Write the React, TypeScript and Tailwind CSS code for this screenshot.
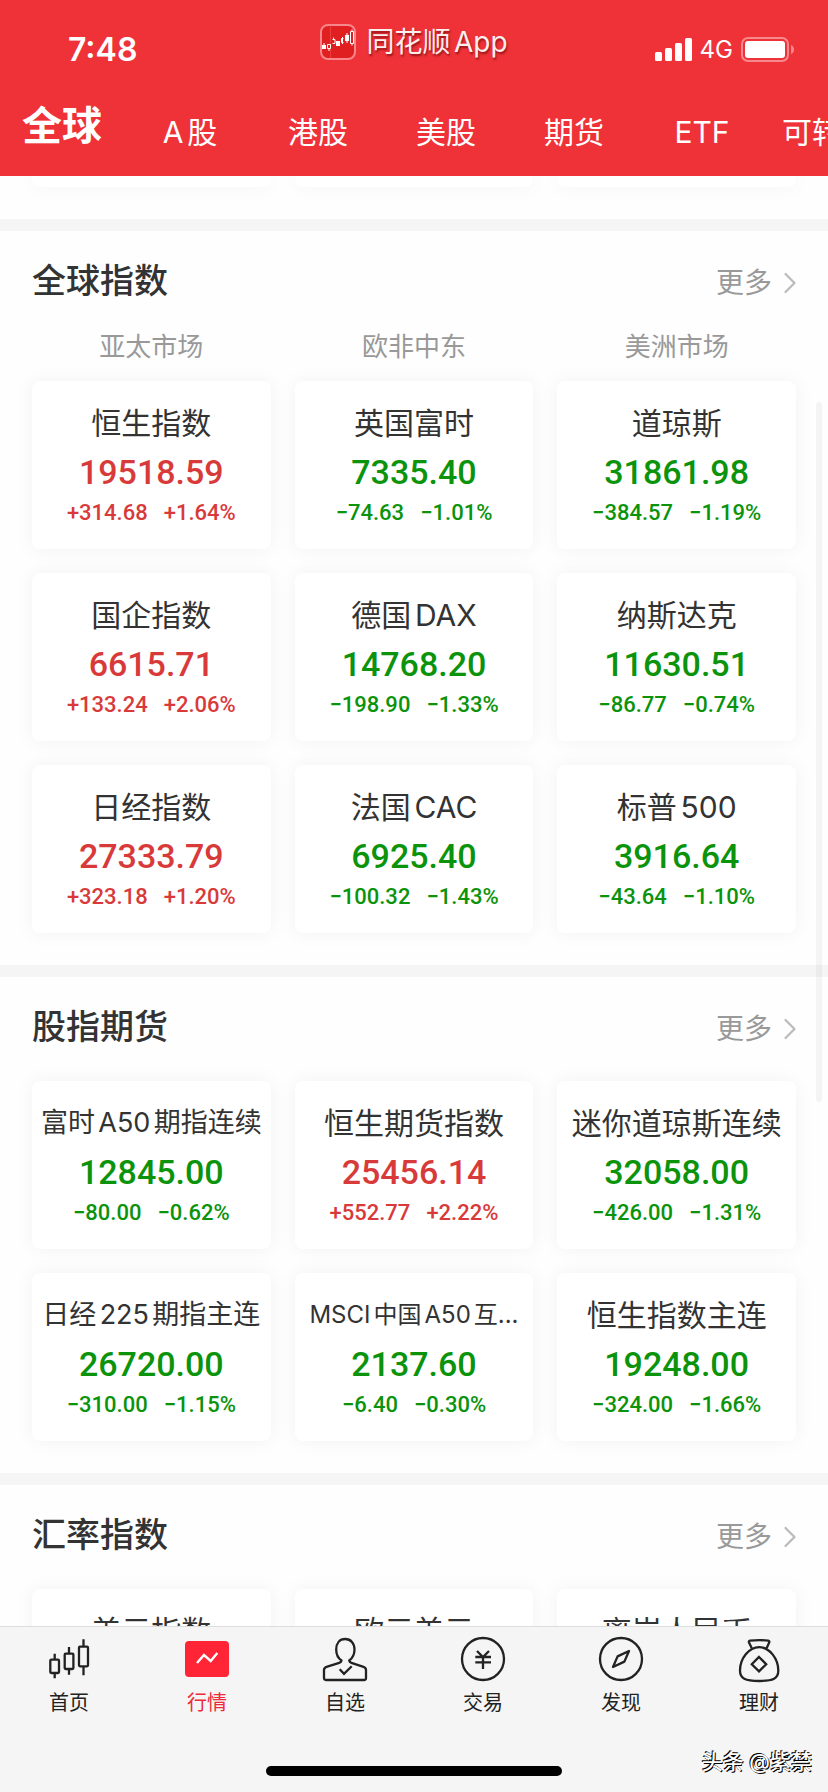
import React from 'react';
import { ChevronRight } from 'lucide-react';

interface Quote {
  name: string;
  price?: string;
  change?: string;
  percent?: string;
}

interface Section {
  title: string;
  markets?: string[];
  quotes: Quote[];
}

const categories = ['全球', 'A股', '港股', '美股', '期货', 'ETF', '可转债'];

const sections: Section[] = [
  {
    title: '全球指数',
    markets: ['亚太市场', '欧非中东', '美洲市场'],
    quotes: [
      { name: '恒生指数', price: '19518.59', change: '+314.68', percent: '+1.64%' },
      { name: '英国富时', price: '7335.40', change: '−74.63', percent: '−1.01%' },
      { name: '道琼斯', price: '31861.98', change: '−384.57', percent: '−1.19%' },
      { name: '国企指数', price: '6615.71', change: '+133.24', percent: '+2.06%' },
      { name: '德国DAX', price: '14768.20', change: '−198.90', percent: '−1.33%' },
      { name: '纳斯达克', price: '11630.51', change: '−86.77', percent: '−0.74%' },
      { name: '日经指数', price: '27333.79', change: '+323.18', percent: '+1.20%' },
      { name: '法国CAC', price: '6925.40', change: '−100.32', percent: '−1.43%' },
      { name: '标普500', price: '3916.64', change: '−43.64', percent: '−1.10%' },
    ],
  },
  {
    title: '股指期货',
    quotes: [
      { name: '富时A50期指连续', price: '12845.00', change: '−80.00', percent: '−0.62%' },
      { name: '恒生期货指数', price: '25456.14', change: '+552.77', percent: '+2.22%' },
      { name: '迷你道琼斯连续', price: '32058.00', change: '−426.00', percent: '−1.31%' },
      { name: '日经225期指主连', price: '26720.00', change: '−310.00', percent: '−1.15%' },
      { name: 'MSCI中国A50互...', price: '2137.60', change: '−6.40', percent: '−0.30%' },
      { name: '恒生指数主连', price: '19248.00', change: '−324.00', percent: '−1.66%' },
    ],
  },
  {
    title: '汇率指数',
    quotes: [{ name: '美元指数' }, { name: '欧元美元' }, { name: '离岸人民币' }],
  },
];

// longer names step down in size so they stay on one line
const nameSize = (name: string) => {
  if (name.length > 10) return 'text-2xl';
  if (name.length > 7) return 'text-[27px]';
  return 'text-3xl';
};

const iconClass = 'w-12 h-12 fill-none stroke-[#222222] stroke-[2.3]';

const tabs = [
  {
    label: '首页',
    icon: (
      <svg viewBox="0 0 48 48" className={iconClass} aria-hidden="true">
        <rect x="5.3" y="24.7" width="8.7" height="13.3" rx="1" />
        <path d="M9.7 18.7v6M9.7 38v5.3" />
        <rect x="19.7" y="18.7" width="8.7" height="15.3" rx="1" />
        <path d="M24 12v6.7M24 34v5.7" />
        <rect x="34" y="11.7" width="9" height="19.6" rx="1" />
        <path d="M38.5 4.3v7.4M38.5 31.3v9" />
      </svg>
    ),
  },
  {
    label: '行情',
    active: true,
    icon: (
      <svg viewBox="0 0 48 48" className="w-12 h-12 fill-none" aria-hidden="true">
        <rect x="2" y="6" width="44" height="36" rx="4" fill="#ff2436" />
        <path d="M14 28l7-8 6.7 6 6.6-8" stroke="#fff" strokeWidth="2.4" />
      </svg>
    ),
  },
  {
    label: '自选',
    icon: (
      <svg viewBox="0 0 48 48" className={iconClass} aria-hidden="true">
        <path
          d="M20.5 25.5C16.8 23 15.2 19.5 15.2 14.5C15.2 8.2 18.6 4 24.2 4S33.5 8.2 33.5 14.5C33.5 19.5 31.8 23 28.2 25.5C28.4 26.8 29.2 27.4 30.4 27.8L42.5 31.8C44.2 32.4 45 33.4 45 35V43C45 44.4 44.4 45 43 45H5C3.6 45 3 44.4 3 43V35C3 33.4 3.8 32.4 5.5 31.8L18.2 27.8C19.4 27.4 20.3 26.8 20.5 25.5Z"
          strokeLinejoin="round"
        />
        <path d="M18.7 34.3l4.3 4.6 7.7-7.6" />
      </svg>
    ),
  },
  {
    label: '交易',
    icon: (
      <svg viewBox="0 0 48 48" className={iconClass} aria-hidden="true">
        <circle cx="24" cy="24" r="21" />
        <path d="M18 16l6 6 6-6M16.3 22H32M16.3 27.4H32M24 22v12" />
      </svg>
    ),
  },
  {
    label: '发现',
    icon: (
      <svg viewBox="0 0 48 48" className={iconClass} aria-hidden="true">
        <circle cx="24" cy="24" r="21" />
        <path d="M32 16L20.6 21.4L16 32L27.4 26.6Z" strokeLinejoin="round" />
      </svg>
    ),
  },
  {
    label: '理财',
    icon: (
      <svg viewBox="0 0 48 48" className={iconClass} aria-hidden="true">
        <path d="M16.8 13.2L14 7.6C13.6 6.5 14 5.9 15 5.7C21 4.9 27.4 4.9 33.2 5.7C34.2 5.9 34.6 6.5 34.2 7.6L31.6 13.2" strokeLinejoin="round" />
        <path d="M24.2 12.2C14 12.2 5 23.5 5 35.5C5 43.5 10 46 24.2 46S43.3 43.5 43.3 35.5C43.3 23.5 34.4 12.2 24.2 12.2Z" />
        <path d="M24 22l7.2 7.2-7.2 7.2-7.2-7.2Z" />
      </svg>
    ),
  },
];

const StatusBar: React.FC = () => (
  <div className="grid grid-cols-3 items-center h-24">
    <p className="pt-1 pl-[68px] text-[32px] leading-10 font-semibold">7:48</p>
    <div className="flex items-center justify-center gap-2.5 pb-3 whitespace-nowrap">
      <svg viewBox="0 0 36 36" className="w-9 h-9 shrink-0" aria-hidden="true">
        <rect x="1" y="1" width="34" height="34" rx="7" fill="#e02020" stroke="#f8868a" strokeWidth="2" />
        <path d="M10.5 2v32" stroke="#ee3b3b" />
        <path d="M2 21h4v4H2zM16 17h4v5h-4zM25 11h4v6h-4z" fill="#fff" />
        <path
          d="M7.5 20.5h3v4h-3zM9 24v3M4 19v2M12.500 15.500h2.500v4h-2.500M13.500 13.500v2M23.500 14.500h-2v4h2M22.500 13v7M27 9v10M30.500 7.500h3v12h-3zM32 5.500v2M32 19.500v2"
          fill="none"
          stroke="#fff"
        />
      </svg>
      <span className="text-[28px] leading-9 text-[#fbeeee] [text-shadow:1px_2px_2px_rgba(90,0,0,0.6)] [text-autospace:normal]">
        同花顺App
      </span>
    </div>
    <div className="flex items-center justify-end gap-2 pt-1 pr-[34px]">
      <svg viewBox="0 0 37 24" className="w-[37px] h-6 fill-white" aria-hidden="true">
        <rect x="0" y="14" width="7" height="9" rx="1.5" />
        <rect x="10" y="10" width="7" height="13" rx="1.5" />
        <rect x="20" y="5" width="7" height="18" rx="1.5" />
        <rect x="30" y="0" width="7" height="23" rx="1.5" />
      </svg>
      <span className="text-2xl">4G</span>
      <svg viewBox="0 0 53 26" className="w-[53px] h-[26px] fill-white" aria-hidden="true">
        <rect x="1" y="1" width="46" height="23" rx="6" fill="none" stroke="#f7898d" strokeWidth="2" />
        <rect x="4" y="4" width="40" height="17" rx="3" />
        <path d="M50 8c2 1 3 2.500 3 4.500s-1 3.500-3 4.500z" fill="#f7898d" />
      </svg>
    </div>
  </div>
);

const QuoteCard: React.FC<{ quote: Quote }> = ({ quote }) => (
  <button
    type="button"
    className="flex flex-col items-center h-42 pt-6 bg-white rounded-lg shadow-[0_0_20px_rgba(0,0,0,0.05)] whitespace-nowrap"
  >
    <span className={`${nameSize(quote.name)} leading-9 mb-2.5 text-[#333333] [text-autospace:normal]`}>
      {quote.name}
    </span>
    {quote.price && (
      <span
        className={`flex flex-col items-center font-[Roboto,sans-serif] font-medium ${
          quote.change?.startsWith('+') ? 'text-[#d83a3a]' : 'text-[#0b930b]'
        }`}
      >
        <span className="text-[34px] leading-[42px]">{quote.price}</span>
        <span className="flex gap-4 text-[22px] leading-10">
          <span>{quote.change}</span>
          <span>{quote.percent}</span>
        </span>
      </span>
    )}
  </button>
);

const QuoteSection: React.FC<{ section: Section }> = ({ section }) => (
  <section className="border-t-12 border-[#f5f5f5] pb-8">
    <div className="flex items-center justify-between h-26 px-8 pb-1">
      <h2 className="text-[34px] leading-10 font-medium text-[#333333]">{section.title}</h2>
      <a href="#" className="flex items-center pt-1 text-[28px] leading-9 text-[#999999]">
        更多
        <ChevronRight className="w-9 h-9 -mr-3 text-[#bbbbbb]" strokeWidth={1.5} />
      </a>
    </div>
    {section.markets && (
      <div className="grid grid-cols-3 gap-6 h-[46px] px-8 text-[26px] leading-6 text-center text-[#999999]">
        {section.markets.map((market) => (
          <p key={market}>{market}</p>
        ))}
      </div>
    )}
    <div className="grid grid-cols-3 gap-6 px-8">
      {section.quotes.map((quote) => (
        <QuoteCard key={quote.name} quote={quote} />
      ))}
    </div>
  </section>
);

export default function App() {
  return (
    <div className="relative flex flex-col h-screen overflow-hidden bg-[#fefefe] font-[Inter,'Noto_Sans_CJK_SC',sans-serif]">
      <header className="shrink-0 bg-[#ef3138] text-white">
        <StatusBar />
        <nav className="flex h-20 -ml-0.5 overflow-hidden">
          {categories.map((category, i) => (
            <button
              key={category}
              type="button"
              className={`w-32 shrink-0 whitespace-nowrap [text-autospace:normal] ${
                i === 0 ? 'pb-5 text-[40px] leading-[60px] font-bold' : 'pb-2 text-3xl'
              } ${category === '可转债' ? 'pl-4 text-left' : ''}`}
            >
              {category}
            </button>
          ))}
        </nav>
      </header>

      <main className="flex-1 min-h-0 overflow-hidden">
        <div className="grid grid-cols-3 gap-6 px-8 pb-8">
          {[0, 1, 2].map((i) => (
            <div key={i} className="h-[11px] bg-white rounded-b-lg shadow-[0_0_20px_rgba(0,0,0,0.05)]" />
          ))}
        </div>
        {sections.map((section) => (
          <QuoteSection key={section.title} section={section} />
        ))}
      </main>

      <footer className="relative shrink-0 h-[166px] border-t border-[#dddddd] bg-[#f5f5f5]">
        <nav className="grid grid-cols-6 pt-2">
          {tabs.map((tab) => (
            <button
              key={tab.label}
              type="button"
              className={`flex flex-col items-center gap-1 text-xl leading-8 ${tab.active ? 'text-[#ee2a3a]' : 'text-[#222222]'}`}
            >
              {tab.icon}
              {tab.label}
            </button>
          ))}
        </nav>
        <div className="absolute bottom-4 left-1/2 w-74 h-2.5 -translate-x-1/2 rounded-full bg-black" />
        <p className="absolute right-4 bottom-3 text-[21px] leading-9 font-medium text-white [text-shadow:-1px_-1px_0_#000,1px_1px_0_#000]">
          头条 @紫禁
        </p>
      </footer>

      {/* scroll indicator */}
      <div className="absolute top-[402px] right-1.5 w-1.5 h-[700px] rounded-full bg-black/4" />
    </div>
  );
}
